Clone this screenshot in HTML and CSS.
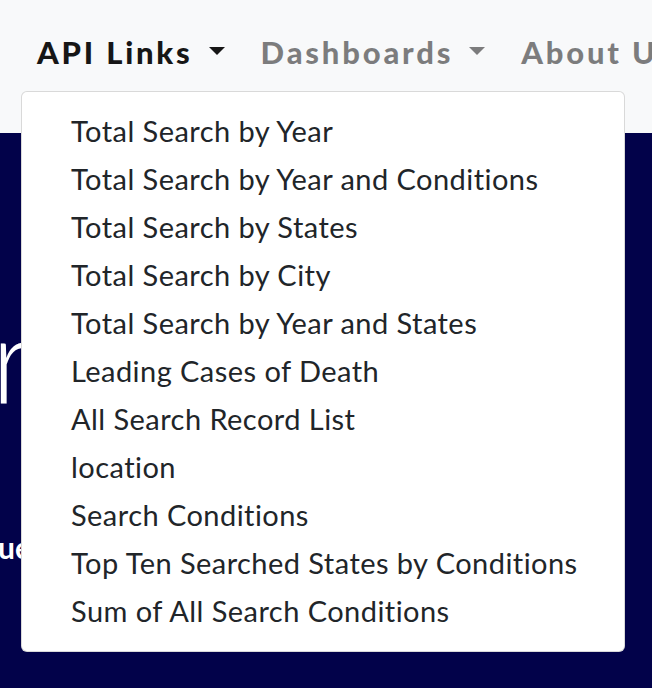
FILE: index.html
```html
<!DOCTYPE html>
<html lang="en">
<head>
<meta charset="utf-8">
<title>API Links</title>
<link rel="stylesheet" href="styles.css">
</head>
<body>
<nav class="navbar">
  <ul class="nav">
    <li class="nav-item dropdown">
      <a class="nav-link active dropdown-toggle" href="#">API Links</a>
      <div class="dropdown-menu">
        <a class="dropdown-item" href="#">Total Search by Year</a>
        <a class="dropdown-item" href="#">Total Search by Year and Conditions</a>
        <a class="dropdown-item" href="#">Total Search by States</a>
        <a class="dropdown-item" href="#">Total Search by City</a>
        <a class="dropdown-item" href="#">Total Search by Year and States</a>
        <a class="dropdown-item" href="#">Leading Cases of Death</a>
        <a class="dropdown-item" href="#">All Search Record List</a>
        <a class="dropdown-item" href="#">location</a>
        <a class="dropdown-item" href="#">Search Conditions</a>
        <a class="dropdown-item" href="#">Top Ten Searched States by Conditions</a>
        <a class="dropdown-item" href="#">Sum of All Search Conditions</a>
      </div>
    </li>
    <li class="nav-item">
      <a class="nav-link dropdown-toggle" href="#">Dashboards</a>
    </li>
    <li class="nav-item">
      <a class="nav-link" href="#">About Us</a>
    </li>
  </ul>
</nav>
<main class="hero">
  <h1 class="hero-title">r</h1>
  <p class="hero-sub">ue</p>
</main>
</body>
</html>
```

FILE: styles.css
```css
* { box-sizing: border-box; }
html, body {
  margin: 0;
  padding: 0;
}
body {
  background: #02024a;
  font-family: Lato, "Open Sans", sans-serif;
  color: #212529;
  height: 688px;
  overflow: hidden;
}
.navbar {
  background: #f8f9fa;
  height: 133px;
  padding: 32px 0 0 37px;
  white-space: nowrap;
}
.nav {
  list-style: none;
  margin: 0;
  padding: 0;
  display: flex;
  gap: 36px;
}
.nav-item {
  position: relative;
}
.nav-link {
  display: inline-flex;
  align-items: center;
  font-size: 31px;
  line-height: 40px;
  font-weight: 900;
  letter-spacing: 2.8px;
  color: rgba(0, 0, 0, 0.5);
  text-decoration: none;
}
.nav-link.active {
  color: #161616;
}
.dropdown-toggle::after {
  content: "";
  display: inline-block;
  margin-left: 16px;
  border-top: 8px solid currentColor;
  border-left: 8.5px solid transparent;
  border-right: 8.5px solid transparent;
  margin-top: -3px;
}
.dropdown-menu {
  position: absolute;
  left: -16px;
  top: 59px;
  width: 604px;
  height: 561px;
  background: #fff;
  border: 1px solid rgba(0, 0, 0, 0.15);
  border-radius: 6px;
  padding: 15px 0;
  display: flex;
  flex-direction: column;
  z-index: 10;
}
.dropdown-item {
  display: block;
  padding: 0 0 0 49px;
  font-size: 29px;
  letter-spacing: 0.45px;
  line-height: 48px;
  color: #212529;
  text-decoration: none;
}
.hero {
  color: #fff;
}
.hero-title {
  margin: 164px 0 0 -9px;
  font-size: 120px;
  font-weight: 300;
  line-height: 120px;
}
.hero-sub {
  margin: 112px 0 0 -2px;
  font-size: 30px;
  font-weight: 700;
  line-height: 36px;
}
```
